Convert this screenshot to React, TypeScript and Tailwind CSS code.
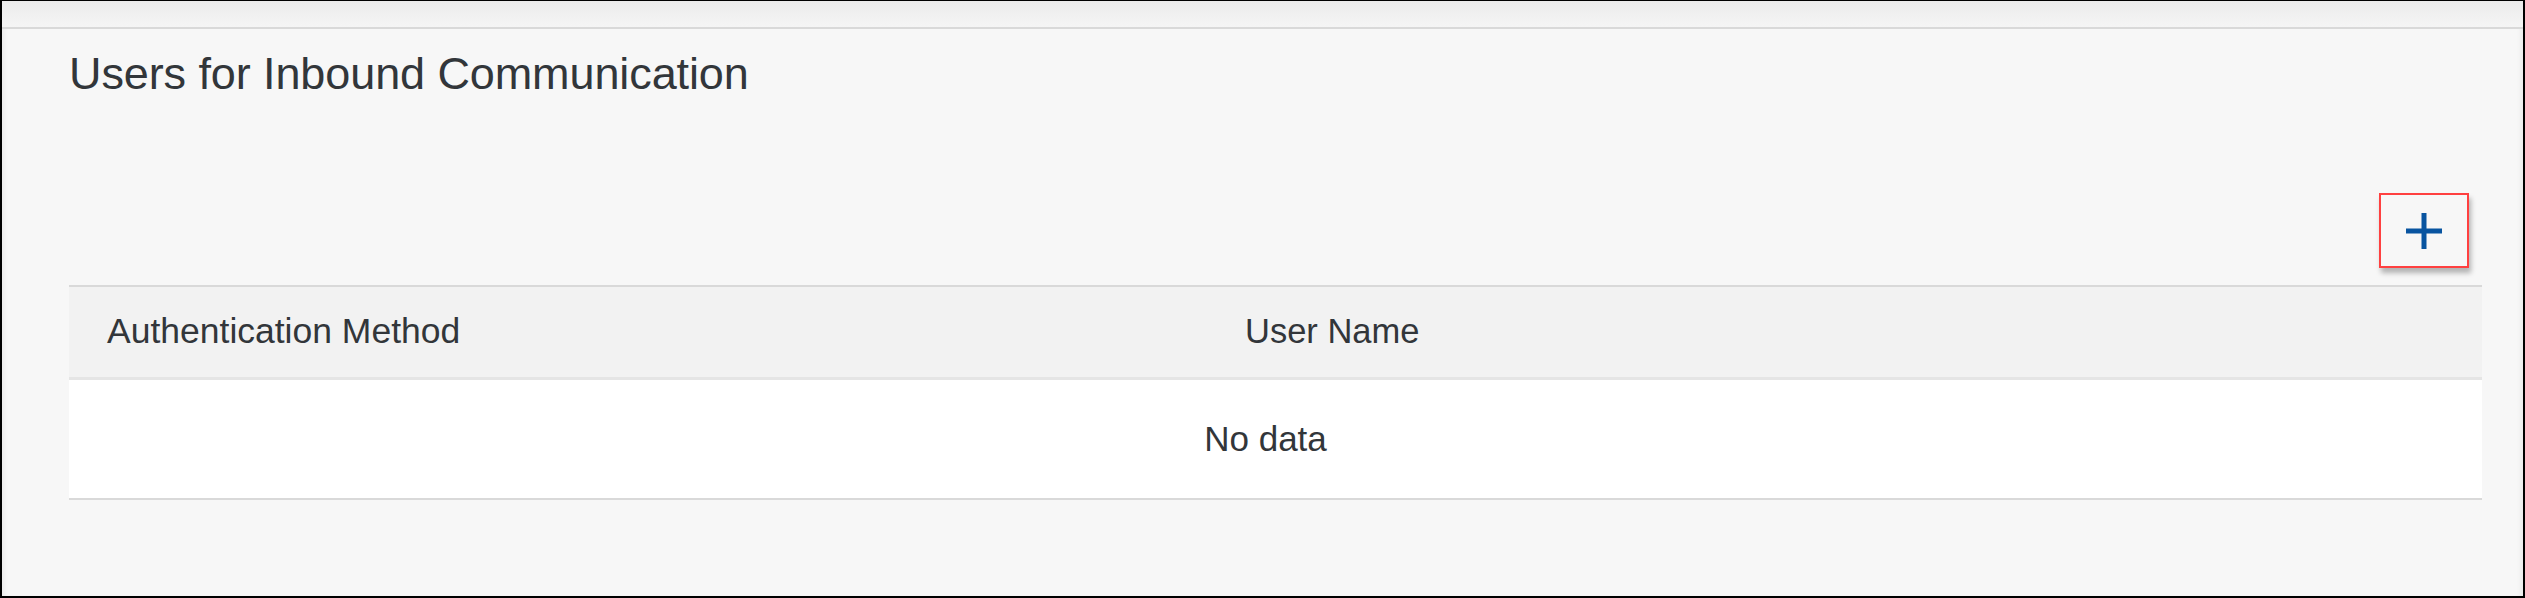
export default function App() {
  return (
    <div
      className="flex flex-col w-[2525px] h-[598px] border-x-2 border-t border-b-2 border-black bg-[#f7f7f7] text-[#32363a] shadow-[inset_5px_0_5px_-3px_rgba(0,0,0,0.06),inset_-5px_0_5px_-3px_rgba(0,0,0,0.06)]"
      style={{ fontFamily: '"Liberation Sans", Arial, sans-serif' }}
    >
      {/* top strip */}
      <div className="h-[28px] shrink-0 border-b-2 border-[#d9d9d9] bg-gradient-to-b from-[#ebebeb] to-[#f5f5f5]" />

      <div className="flex flex-col pl-[67px] pr-[41px] pt-[22px]">
        <h2 className="text-[45px] leading-[46px] tracking-[-0.1px] font-normal">
          Users for Inbound Communication
        </h2>

        {/* toolbar */}
        <div className="flex justify-end mt-[96px] pr-[13px]">
          <button className="w-[90px] h-[75px] flex items-center justify-center border-2 border-[#ff4040] shadow-[2px_5px_5px_rgba(0,0,0,0.28)]">
            <svg viewBox="0 0 36 36" className="w-[36px] h-[36px]" fill="none" stroke="#0854a0" strokeWidth="5">
              <path d="M0 18H36M18 0V36" />
            </svg>
          </button>
        </div>

        {/* table */}
        <div className="mt-[17px] border-t-2 border-[#d9d9d9]">
          <div className="flex items-center h-[93px] bg-[#f2f2f2] border-b-[3px] border-[#e5e5e5] text-[34.5px]">
            <div className="w-[1137px] pl-[38px] text-[35.5px]">Authentication Method</div>
            <div className="pl-[39px]">User Name</div>
          </div>
          <div className="flex items-center justify-center h-[120px] pr-[20px] bg-white border-b-2 border-[#d9d9d9] text-[35px]">
            No data
          </div>
        </div>
      </div>
    </div>
  );
}
